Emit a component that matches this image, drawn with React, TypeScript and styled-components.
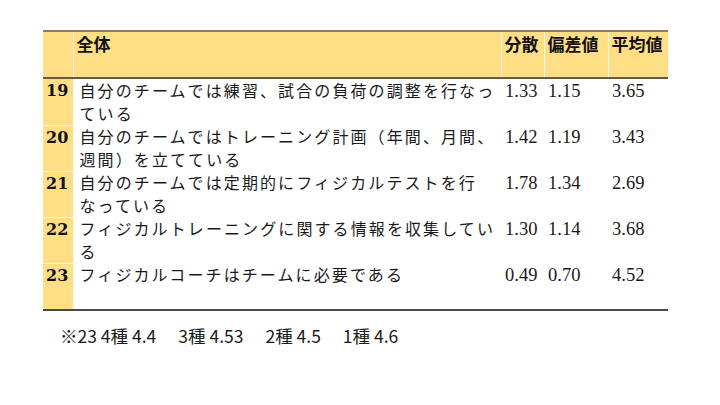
import React from 'react'
import styled, { createGlobalStyle } from 'styled-components'

interface RowData {
  no: number
  lines: string[]
  variance: string
  deviation: string
  mean: string
}

const rows: RowData[] = [
  { no: 19, lines: ['自分のチームでは練習、試合の負荷の調整を行なっ', 'ている'], variance: '1.33', deviation: '1.15', mean: '3.65' },
  { no: 20, lines: ['自分のチームではトレーニング計画（年間、月間、', '週間）を立てている'], variance: '1.42', deviation: '1.19', mean: '3.43' },
  { no: 21, lines: ['自分のチームでは定期的にフィジカルテストを行', 'なっている'], variance: '1.78', deviation: '1.34', mean: '2.69' },
  { no: 22, lines: ['フィジカルトレーニングに関する情報を収集してい', 'る'], variance: '1.30', deviation: '1.14', mean: '3.68' },
  { no: 23, lines: ['フィジカルコーチはチームに必要である'], variance: '0.49', deviation: '0.70', mean: '4.52' },
]

const notes = ['※23 4種 4.4', '3種 4.53', '2種 4.5', '1種 4.6']

const GlobalStyle = createGlobalStyle`
  body {
    margin: 0;
    background: #ffffff;
    font-family: "Noto Sans CJK JP", "Noto Sans", sans-serif;
    color: #111111;
  }
  th, td {
    box-sizing: border-box;
  }
`

const Page = styled.div`
  width: 720px;
  height: 405px;
  padding: 30px 0 0 43px;
  box-sizing: border-box;
`

const Table = styled.table`
  border-collapse: collapse;
  table-layout: fixed;
  width: 625px;
  border-top: 2px solid #8e7f5c;
  border-bottom: 2px solid #4a4a4a;
`

const HeadRow = styled.tr`
  height: 47px;
  border-bottom: 2px solid #6b5a3a;
`

const HeadCell = styled.th<{ $w: number }>`
  width: ${p => p.$w}px;
  background: #ffde86;
  border-left: 1px solid #fff8e4;
  padding: 1px 0 0 3px;
  vertical-align: top;
  text-align: left;
  font-weight: 700;
  font-size: 17px;
  line-height: 22px;
  white-space: nowrap;
  &:first-child {
    border-left: none;
  }
`

const BodyRow = styled.tr<{ $h: number }>`
  height: ${p => p.$h}px;
`

const NumCell = styled.td`
  background: #ffde86;
  border-top: 1px solid #fff6dc;
  border-right: 1px solid #fff6dc;
  vertical-align: top;
  padding: 1px 0 0 3px;
  font-family: "DejaVu Serif", "Liberation Serif", serif;
  font-weight: 700;
  font-size: 16px;
  line-height: 22px;
`

const TextCell = styled.td`
  vertical-align: top;
  padding: 0 0 0 6px;
  font-size: 16px;
  letter-spacing: 2.1px;
  line-height: 23px;
  white-space: nowrap;
  color: #1a1a1a;
`

const ValueCell = styled.td`
  vertical-align: top;
  padding: 1px 0 0 4px;
  font-family: "Liberation Serif", serif;
  font-size: 18.5px;
  line-height: 22px;
  color: #1a1a1a;
`

const Note = styled.div`
  display: flex;
  gap: 22px;
  margin: 14px 0 0 17px;
  font-size: 17.5px;
  line-height: 22px;
  white-space: pre;
  color: #1a1a1a;
`

export default function App() {
  return (
    <Page>
      <GlobalStyle />
      <Table>
        <thead>
          <HeadRow>
            <HeadCell $w={30}></HeadCell>
            <HeadCell $w={428}>全体</HeadCell>
            <HeadCell $w={43}>分散</HeadCell>
            <HeadCell $w={64}>偏差値</HeadCell>
            <HeadCell $w={60}>平均値</HeadCell>
          </HeadRow>
        </thead>
        <tbody>
          {rows.map((row, i) => (
            <BodyRow key={row.no} $h={i === rows.length - 1 ? 47 : 46}>
              <NumCell>{row.no}</NumCell>
              <TextCell>
                {row.lines.map((line, j) => (
                  <div key={j}>{line}</div>
                ))}
              </TextCell>
              <ValueCell>{row.variance}</ValueCell>
              <ValueCell>{row.deviation}</ValueCell>
              <ValueCell>{row.mean}</ValueCell>
            </BodyRow>
          ))}
        </tbody>
      </Table>
      <Note>
        {notes.map(n => (
          <span key={n}>{n}</span>
        ))}
      </Note>
    </Page>
  )
}
